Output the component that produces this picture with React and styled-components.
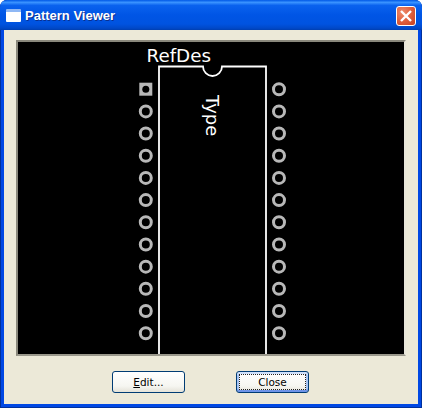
import React from 'react'
import styled, { createGlobalStyle } from 'styled-components'

const GlobalStyle = createGlobalStyle`
    html, body {
        margin: 0;
        padding: 0;
        background: #fff;
    }
`;

const Window = styled.div`
    width: 422px;
    height: 408px;
    box-sizing: border-box;
    display: flex;
    flex-direction: column;
    border-radius: 7px 7px 0 0;
    overflow: hidden;
    background: #0048e4;
    box-shadow: inset 0 0 0 1px #00309c;
`;

const TitleBar = styled.div`
    height: 30px;
    flex: none;
    box-sizing: border-box;
    display: flex;
    align-items: center;
    padding: 0 6px 0 6px;
    gap: 4px;
    background: linear-gradient(180deg, #0058e6 0%, #3a93ff 8%, #0a62ee 18%, #0055e5 50%, #0053e0 80%, #0048c8 94%, #003fb0 100%);
`;

const WindowIcon = styled.div`
    width: 15px;
    height: 13px;
    box-sizing: border-box;
    background: #fff;
    border-top: 3px solid #8fb8f5;
    border-radius: 1px;
    margin-top: 1px;
`;

const Title = styled.span`
    flex: 1;
    font-family: "Liberation Sans", sans-serif;
    font-weight: 700;
    font-size: 13px;
    color: #fff;
    text-shadow: 1px 1px 0 #0a2f8f;
    margin-top: 1px;
`;

const CloseBox = styled.div`
    width: 20px;
    height: 20px;
    box-sizing: border-box;
    border: 1px solid #fff;
    border-radius: 3px;
    background: radial-gradient(circle at 30% 30%, #ee8c6c 0%, #e0603e 50%, #c8401f 100%);
    display: flex;
    align-items: center;
    justify-content: center;
    margin-top: 2px;
`;

const Body = styled.div`
    flex: 1;
    margin: 0 4px 4px;
    background: #ece9d8;
    display: flex;
    flex-direction: column;
    padding: 10px 12px 0;
    min-height: 0;
`;

const Canvas = styled.div`
    height: 316px;
    flex: none;
    box-sizing: border-box;
    background: #000;
    border: 2px solid;
    border-color: #8a887c #e8e6da #9a988c #8a887c;
`;

const Footer = styled.div`
    display: flex;
    gap: 51px;
    padding: 15px 0 0 96px;
`;

const Button = styled.button`
    width: 73px;
    height: 22px;
    box-sizing: border-box;
    padding: 0;
    border: 1px solid #003c74;
    border-radius: 3px;
    font-family: "DejaVu Sans", sans-serif;
    font-size: 10.5px;
    color: #000;
    background: linear-gradient(180deg, #ffffff 0%, #f6f6f1 70%, #e4e2d8 100%);
    outline: ${props => props.focused ? "1px dotted #222" : "none"};
    outline-offset: -4px;
    box-shadow: ${props => props.focused ? "inset 0 -2px 0 #6f94e8, inset 0 2px 0 #cfe0fa, inset 2px 0 0 #a8c4f2, inset -2px 0 0 #a8c4f2" : "none"};

    u {
        text-decoration: underline;
    }
`;

const pinRows = Array.from({ length: 12 }, (_, i) => 47.2 + i * 22.18);

const Pin = ({ x, y, square }) => (
    <g>
        {square
            ? <rect x={x - 6.5} y={y - 6.5} width={13} height={13} fill="#b8b8b8" />
            : <circle cx={x} cy={y} r={5.5} fill="none" stroke="#b8b8b8" strokeWidth={3} />}
        {square && <circle cx={x} cy={y} r={3.5} fill="#000" />}
    </g>
);

const Pattern = () => (
    <svg width="386" height="312" viewBox="0 0 386 312" style={{ display: "block" }}>
        <path
            d="M141 312 V24.5 H185 A9.5 9.5 0 0 0 204 24.5 H248 V312"
            fill="none"
            stroke="#fff"
            strokeWidth="1.8"
        />
        {pinRows.map((y, i) => <Pin key={i} x={127.8} y={y} square={i === 0} />)}
        {pinRows.map((y, i) => <Pin key={i} x={261} y={y} />)}
        <text x="128.5" y="20" fill="#fff" fontFamily="DejaVu Sans" fontSize="18.3">RefDes</text>
        <text transform="translate(187.5 53) rotate(90)" fill="#fff" fontFamily="DejaVu Sans" fontSize="18">Type</text>
    </svg>
);

export default function App() {
    return (
        <>
            <GlobalStyle />
            <Window>
                <TitleBar>
                    <WindowIcon />
                    <Title>Pattern Viewer</Title>
                    <CloseBox>
                        <svg width="14" height="14" viewBox="0 0 14 14">
                            <path d="M2 2 L12 12 M12 2 L2 12" stroke="#fff" strokeWidth="2.4" />
                        </svg>
                    </CloseBox>
                </TitleBar>
                <Body>
                    <Canvas>
                        <Pattern />
                    </Canvas>
                    <Footer>
                        <Button><u>E</u>dit...</Button>
                        <Button focused>Close</Button>
                    </Footer>
                </Body>
            </Window>
        </>
    )
}
